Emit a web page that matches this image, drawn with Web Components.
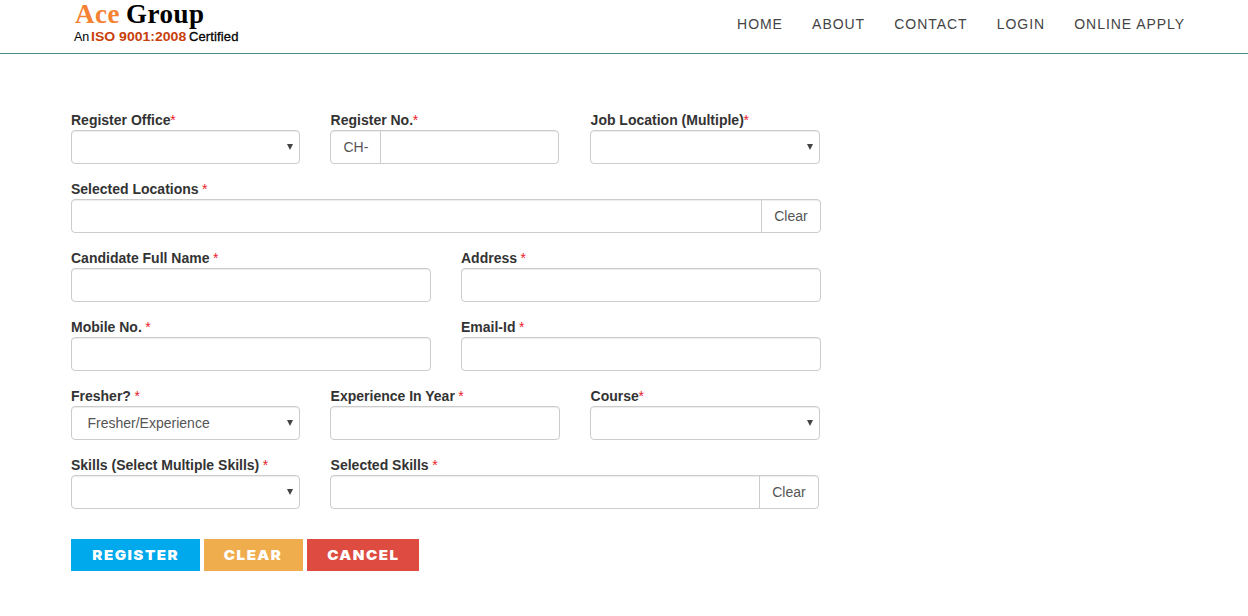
<!DOCTYPE html>
<html lang="en">
<head>
<meta charset="utf-8">
<title>Ace Group - Register</title>
<style>
body{margin:0;background:#fff;font:14px/20px "Liberation Sans",Arial,sans-serif;color:#333}
</style>
</head>
<body>
<ace-header></ace-header>
<ace-form></ace-form>
<script>
function define(name, html, setup){
  customElements.define(name, class extends HTMLElement{
    constructor(){
      super();
      this.attachShadow({mode:'open'});
    }
    connectedCallback(){
      const t=document.createElement('template');
      t.innerHTML=html;
      this.shadowRoot.replaceChildren(t.content.cloneNode(true));
      if(setup) setup(this,this.shadowRoot);
    }
  });
}

define('ace-logo', `<style>
:host{display:block;color:#000}
.name{display:flex;gap:6px;height:28px;font:bold 27px/27px "Liberation Serif",serif;letter-spacing:.5px;padding-left:1px}
.name span:first-child{color:#f58233}
.cert{display:flex;height:16px;font-size:12px;line-height:16px}
.an{width:17px;font-size:12.5px}
b{width:98px;font-size:13px;color:#c8400c;transform:scaleX(1.08);transform-origin:0 50%;white-space:nowrap}
.c{font-size:13px;-webkit-text-stroke:.3px #000;letter-spacing:.12px}
</style><div class="name"><span>Ace</span><span>Group</span></div>
<div class="cert"><span class="an">An</span><b>ISO 9001:2008</b><span class="c">Certified</span></div>`);

define('ace-nav-link', `<style>
:host{display:block;font-size:14px;line-height:20px;letter-spacing:.95px;color:#444;white-space:nowrap}
</style><slot></slot>`);

define('ace-header', `<style>
:host{display:flex;box-sizing:border-box;height:54px;border-bottom:1px solid #4b8f8c;justify-content:space-between;padding:1px 63px 0 74px}
nav{display:flex;gap:29.2px;padding-top:13px}
</style><ace-logo></ace-logo>
<nav><ace-nav-link>HOME</ace-nav-link><ace-nav-link>ABOUT</ace-nav-link><ace-nav-link>CONTACT</ace-nav-link><ace-nav-link>LOGIN</ace-nav-link><ace-nav-link>ONLINE APPLY</ace-nav-link></nav>`);

define('ace-field', `<style>
:host{display:block}
label{display:block;height:20px;font-weight:bold;white-space:nowrap;padding-left:var(--inset,0)}
i{font-style:normal;font-weight:normal;color:#e8202a;margin-left:-.4px}
.box{display:flex;box-sizing:border-box;height:34px;border:1px solid #ccc;border-radius:4px;box-shadow:inset 0 1px 1px rgba(0,0,0,.075);color:#555;line-height:32px}
.value{flex:1;padding-left:15.5px}
.pre{border-right:1px solid #ccc;padding:0 11.5px 0 12.5px}
.post{border-left:1px solid #ccc;padding:0 12.3px 0 12.2px}
svg{width:6px;height:6px;margin:13px 6px 0 0}
[hidden]{display:none}
</style><label><span></span><i>*</i></label>
<div class="box"><span class="pre" hidden></span><span class="value"><slot></slot></span><svg viewBox="0 0 6 6" hidden><path d="M0 0h6L3 6z" fill="#444"/></svg><span class="post" hidden></span></div>`,
(host,root)=>{
  root.querySelector('label span').textContent=host.getAttribute('label');
  if(host.hasAttribute('spaced')) root.querySelector('i').before('\u00a0');
  if(host.hasAttribute('select')) root.querySelector('svg').removeAttribute('hidden');
  for(const side of ['pre','post']) if(host.hasAttribute(side)){
    const s=root.querySelector('.'+side);
    s.textContent=host.getAttribute(side);
    s.hidden=false;
  }
});

define('ace-button', `<style>
:host{display:block;box-sizing:border-box;height:32px;width:var(--w);text-align:center;background:var(--bg);color:#fff;font:900 13.5px/32px Inter,sans-serif;letter-spacing:1.3px}
span{display:inline-block;transform:scaleX(1.12)}
</style><span><slot></slot></span>`);

define('ace-form', `<style>
:host{display:block;padding:56px 0 0 71px;width:750px}
.row{display:grid;height:54px;margin-bottom:15px}
.row.two{grid-template-columns:360px 360px;column-gap:30px}
.row.one{grid-template-columns:750px}
.row.skills{grid-template-columns:229px 489px;column-gap:30px}
.row.three{grid-template-columns:229px 230px 230px;column-gap:30px}
.three ace-field+ace-field,.skills ace-field+ace-field{--inset:.6px}
.buttons{display:flex;gap:4px;padding-top:15px}
</style>
<div class="row three"><ace-field label="Register Office" select></ace-field><ace-field label="Register No." pre="CH-" style="margin-right:1px"></ace-field><ace-field label="Job Location (Multiple)" select></ace-field></div>
<div class="row one"><ace-field label="Selected Locations" spaced post="Clear"></ace-field></div>
<div class="row two"><ace-field label="Candidate Full Name" spaced></ace-field><ace-field label="Address" spaced></ace-field></div>
<div class="row two"><ace-field label="Mobile No." spaced></ace-field><ace-field label="Email-Id" spaced></ace-field></div>
<div class="row three"><ace-field label="Fresher?" spaced select>Fresher/Experience</ace-field><ace-field label="Experience In Year" spaced></ace-field><ace-field label="Course" select></ace-field></div>
<div class="row skills"><ace-field label="Skills (Select Multiple Skills)" spaced select></ace-field><ace-field label="Selected Skills" spaced post="Clear"></ace-field></div>
<div class="buttons"><ace-button style="--w:129px;--bg:#00a8ec">REGISTER</ace-button><ace-button style="--w:99px;--bg:#f0ad4e">CLEAR</ace-button><ace-button style="--w:112px;--bg:#de4c41">CANCEL</ace-button></div>`);
</script>
</body>
</html>
